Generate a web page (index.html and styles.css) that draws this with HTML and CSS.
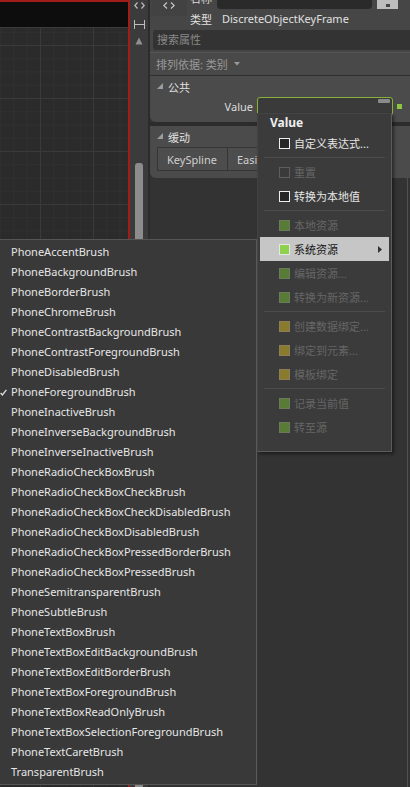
FILE: index.html
```html
<!DOCTYPE html>
<html>
<head>
<meta charset="utf-8">
<link rel="stylesheet" href="styles.css">
</head>
<body>
<div class="app">
  <div class="canvas">
    <div class="canvas-top"></div>
    <div class="canvas-grid"></div>
  </div>
  <div class="strip">
    <svg class="strip-icon i1" width="11" height="7" viewBox="0 0 11 7"><path d="M3.5 0.5 L0.8 3.5 L3.5 6.5 M7.5 0.5 L10.2 3.5 L7.5 6.5" fill="none" stroke="#bdbdbd" stroke-width="1.2"/></svg>
    <svg class="strip-icon i2" width="11" height="9" viewBox="0 0 11 9"><path d="M0.5 0 V9 M10.5 0 V9 M1 4.5 H10" fill="none" stroke="#bdbdbd" stroke-width="1"/></svg>
    <svg class="strip-icon i3" width="8" height="8" viewBox="0 0 8 8"><path d="M4 0.5 L7.5 7.5 H0.5 Z" fill="#8f8f8f"/></svg>
    <div class="scroll-track"><div class="scroll-thumb"></div></div>
  </div>
  <div class="panel">
    <div class="props-top">
      <div class="panel-head">
        <div class="head-tab"><svg width="12" height="7" viewBox="0 0 12 7"><path d="M4 0.5 L0.8 3.5 L4 6.5 M8 0.5 L11.2 3.5 L8 6.5" fill="none" stroke="#c8c8c8" stroke-width="1.1"/></svg></div>
        <div class="head-rows">
          <div class="name-row"><span class="name-label">名称</span><div class="name-input"></div><div class="name-btn"><span class="name-dot"></span></div></div>
          <div class="type-row"><span class="type-label">类型</span><span class="type-val">DiscreteObjectKeyFrame</span></div>
        </div>
      </div>
      <div class="search">搜索属性</div>
      <div class="sort">排列依据: 类别<svg class="sort-arrow" width="6" height="4" viewBox="0 0 6 4"><path d="M0 0 H6 L3 3.5 Z" fill="#9a9a9a"/></svg></div>
    </div>
    <div class="group g1">
      <div class="group-head"><svg class="group-tri" width="6" height="6" viewBox="0 0 6 6"><path d="M6 0 V6 H0 Z" fill="#9c9c9c"/></svg>公共</div>
      <div class="value-row">
        <span class="value-label">Value</span>
        <div class="value-input"><div class="value-drop"></div></div>
        <div class="value-mark"></div>
      </div>
    </div>
    <div class="group g2">
      <div class="group-head"><svg class="group-tri" width="6" height="6" viewBox="0 0 6 6"><path d="M6 0 V6 H0 Z" fill="#9c9c9c"/></svg>缓动</div>
      <div class="tabs"><div class="tab">KeySpline</div><div class="tab">Easing</div></div>
    </div>
  </div>
</div>

<div class="ctx-menu">
  <div class="ctx-title">Value</div>
  <div class="ctx-item"><span class="cb cb-white"></span>自定义表达式...</div>
  <div class="ctx-sep"></div>
  <div class="ctx-item disabled"><span class="cb cb-dis"></span>重置</div>
  <div class="ctx-item"><span class="cb cb-white"></span>转换为本地值</div>
  <div class="ctx-sep"></div>
  <div class="ctx-item disabled"><span class="cb cb-green"></span>本地资源</div>
  <div class="ctx-item active"><span class="cb cb-bright"></span>系统资源<svg class="ctx-arrow" width="4" height="7" viewBox="0 0 4 7"><path d="M0 0 L4 3.5 L0 7 Z" fill="#333"/></svg></div>
  <div class="ctx-item disabled"><span class="cb cb-green"></span>编辑资源...</div>
  <div class="ctx-item disabled"><span class="cb cb-green"></span>转换为新资源...</div>
  <div class="ctx-sep"></div>
  <div class="ctx-item disabled"><span class="cb cb-olive"></span>创建数据绑定...</div>
  <div class="ctx-item disabled"><span class="cb cb-olive"></span>绑定到元素...</div>
  <div class="ctx-item disabled"><span class="cb cb-olive"></span>模板绑定</div>
  <div class="ctx-sep"></div>
  <div class="ctx-item disabled"><span class="cb cb-green"></span>记录当前值</div>
  <div class="ctx-item disabled"><span class="cb cb-green"></span>转至源</div>
</div>

<div class="sub-menu">
  <div class="sub-item">PhoneAccentBrush</div>
  <div class="sub-item">PhoneBackgroundBrush</div>
  <div class="sub-item">PhoneBorderBrush</div>
  <div class="sub-item">PhoneChromeBrush</div>
  <div class="sub-item">PhoneContrastBackgroundBrush</div>
  <div class="sub-item">PhoneContrastForegroundBrush</div>
  <div class="sub-item">PhoneDisabledBrush</div>
  <div class="sub-item checked"><svg class="check" width="7" height="7" viewBox="0 0 7 7"><path d="M0.6 4 L2.4 6 L6.4 0.8" fill="none" stroke="#e0e0e0" stroke-width="1.3"/></svg>PhoneForegroundBrush</div>
  <div class="sub-item">PhoneInactiveBrush</div>
  <div class="sub-item">PhoneInverseBackgroundBrush</div>
  <div class="sub-item">PhoneInverseInactiveBrush</div>
  <div class="sub-item">PhoneRadioCheckBoxBrush</div>
  <div class="sub-item">PhoneRadioCheckBoxCheckBrush</div>
  <div class="sub-item">PhoneRadioCheckBoxCheckDisabledBrush</div>
  <div class="sub-item">PhoneRadioCheckBoxDisabledBrush</div>
  <div class="sub-item">PhoneRadioCheckBoxPressedBorderBrush</div>
  <div class="sub-item">PhoneRadioCheckBoxPressedBrush</div>
  <div class="sub-item">PhoneSemitransparentBrush</div>
  <div class="sub-item">PhoneSubtleBrush</div>
  <div class="sub-item">PhoneTextBoxBrush</div>
  <div class="sub-item">PhoneTextBoxEditBackgroundBrush</div>
  <div class="sub-item">PhoneTextBoxEditBorderBrush</div>
  <div class="sub-item">PhoneTextBoxForegroundBrush</div>
  <div class="sub-item">PhoneTextBoxReadOnlyBrush</div>
  <div class="sub-item">PhoneTextBoxSelectionForegroundBrush</div>
  <div class="sub-item">PhoneTextCaretBrush</div>
  <div class="sub-item">TransparentBrush</div>
</div>
</body>
</html>
```

FILE: styles.css
```css
html, body {
  margin: 0;
  padding: 0;
}
body {
  width: 410px;
  height: 787px;
  overflow: hidden;
  position: relative;
  background: #333333;
  font-family: "Noto Sans", "Noto Sans CJK SC", sans-serif;
  font-size: 11px;
  color: #dcdcdc;
}
.app {
  display: flex;
  height: 787px;
}

/* canvas */
.canvas {
  width: 128px;
  border-right: 2px solid #a11d19;
  display: flex;
  flex-direction: column;
  background: #2b2b2b;
}
.canvas-top {
  height: 25px;
  border-top: 2px solid #a11d19;
  background: #0d0d0d;
  border-bottom: 1px solid #3a3a3a;
}
.canvas-grid {
  flex: 1;
  background-color: #2b2b2b;
  background-image:
    linear-gradient(to right, #3a3a3a 1px, transparent 1px),
    linear-gradient(to bottom, #3a3a3a 1px, transparent 1px),
    linear-gradient(to right, #303030 1px, transparent 1px),
    linear-gradient(to bottom, #303030 1px, transparent 1px);
  background-size: 53px 53px, 53px 53px, 13.25px 13.25px, 13.25px 13.25px;
  background-position: 40px 0, 0 17px, 40px 0, 0 17px;
}

/* strip */
.strip {
  width: 18px;
  background: #3b3b3b;
  display: flex;
  flex-direction: column;
  align-items: center;
}
.strip-icon { display: block; flex: none; }
.i1 { margin-top: 2px; }
.i2 { margin-top: 11px; }
.i3 { margin-top: 8px; }
.scroll-track {
  flex: 1;
  width: 8px;
  display: flex;
  flex-direction: column;
}
.scroll-thumb {
  margin-top: 118px;
  flex: 1;
  background: #8c8c8c;
  border-radius: 3px 3px 0 0;
}

/* panel */
.panel {
  flex: 1;
  border-left: 2px solid #2c2c2c;
  display: flex;
  flex-direction: column;
  background: #333333;
  box-shadow: inset -2px 0 0 #333, inset -3px 0 0 #505050;
}
.props-top {
  background: #464646;
}
.panel-head {
  height: 28px;
  display: flex;
  align-items: flex-start;
}
.head-tab {
  width: 36px;
  height: 16px;
  margin-left: 1px;
  background: #424242;
  display: flex;
  align-items: center;
  justify-content: center;
  padding-bottom: 6px;
  box-sizing: border-box;
}
.head-rows {
  margin-left: 3px;
  flex: 1;
  display: flex;
  flex-direction: column;
}
.name-row {
  margin-top: -11px;
  height: 20px;
  display: flex;
  align-items: center;
}
.name-label {
  font-size: 11px;
  width: 27px;
  color: #dcdcdc;
  line-height: 20px;
}
.name-input {
  width: 155px;
  height: 20px;
  background: #2a2a2a;
  border-radius: 4px;
}
.name-btn {
  width: 21px;
  height: 20px;
  margin-left: 5px;
  background: #bdbdbd;
  position: relative;
}
.name-dot {
  position: absolute;
  left: 9px;
  top: 15px;
  width: 4px;
  height: 3px;
  background: #444;
}
.type-row {
  height: 19px;
  display: flex;
  align-items: center;
  white-space: nowrap;
}
.type-label {
  font-size: 11px;
  color: #e0e0e0;
  width: 32px;
}
.type-val {
  color: #e0e0e0;
  font-size: 11px;
}
.search {
  margin: 2px 0 0 3px;
  height: 20px;
  line-height: 20px;
  background: #333333;
  border-radius: 3px 0 0 3px;
  padding-left: 4px;
  color: #888888;
  font-size: 11px;
}
.sort {
  margin-top: 2px;
  height: 22px;
  border-top: 1px solid #565656;
  border-bottom: 1px solid #2f2f2f;
  background: #494949;
  display: flex;
  align-items: center;
  padding-left: 6px;
  color: #9a9a9a;
  font-size: 11px;
}
.sort-arrow { margin-left: 6px; }

.group {
  background: #4b4b4b;
  border-radius: 0 0 0 6px;
}
.g1 {
  padding-bottom: 6px;
}
.g2 {
  border-top: 4px solid #2c2c2c;
  padding-bottom: 7px;
}
.group-head {
  height: 21px;
  display: flex;
  align-items: center;
  padding-left: 7px;
  font-size: 11px;
  color: #e0e0e0;
}
.group-tri { margin-right: 5px; margin-top: -1px; }
.value-row {
  height: 19px;
  display: flex;
  align-items: center;
  justify-content: flex-end;
  padding-right: 8px;
}
.value-label {
  color: #dcdcdc;
}
.value-input {
  margin-left: 4px;
  width: 136px;
  height: 19px;
  box-sizing: border-box;
  border: 1px solid #86b23a;
  border-radius: 3px;
  background: #3a3a3a;
  position: relative;
}
.value-drop {
  position: absolute;
  right: 2px;
  top: 1px;
  width: 12px;
  height: 4px;
  background: #8a8a8a;
  border-radius: 1px;
}
.value-mark {
  margin-left: 4px;
  width: 5px;
  height: 5px;
  background: #8dc63f;
}
.tabs {
  display: flex;
  margin-left: 7px;
}
.tab {
  height: 24px;
  box-sizing: border-box;
  border: 1px solid #363636;
  background: #4d4d4d;
  color: #cfcfcf;
  display: flex;
  align-items: center;
  padding: 0 9px;
  width: 71px;
}
.tab + .tab { border-left: none; }

/* context menu */
.ctx-menu {
  position: absolute;
  left: 257px;
  top: 113px;
  width: 135px;
  box-sizing: border-box;
  background: #3b3b3b;
  border: 1px solid #5c5c5c;
  border-left-color: #444;
  border-top-color: #444;
  box-shadow: 2px 2px 3px rgba(0,0,0,0.45);
  padding-bottom: 12px;
}
.ctx-title {
  height: 17px;
  line-height: 18px;
  padding-left: 12px;
  font-weight: bold;
  color: #eeeeee;
  font-size: 12px;
}
.ctx-item {
  height: 24px;
  margin: 0 2px;
  padding-left: 19px;
  display: flex;
  align-items: center;
  font-size: 11px;
  color: #e6e6e6;
}
.ctx-item.disabled { color: #666666; }
.ctx-item.active {
  background: #c6c6c6;
  color: #141414;
}
.cb {
  width: 11px;
  height: 11px;
  box-sizing: border-box;
  margin-right: 4px;
  flex: none;
}
.cb-white { border: 1.5px solid #eeeeee; background: #262626; }
.cb-dis { border: 1px solid #5e5e5e; background: #3a3a3a; }
.cb-green { border: 1px solid #6c7a5c; background: #587c35; }
.cb-olive { border: 1px solid #8a7f5a; background: #8a7a2e; }
.cb-bright { border: 1px solid #e6e6e6; background: #8ed14e; }
.ctx-arrow { margin-left: auto; margin-right: 7px; }
.ctx-sep {
  height: 1px;
  margin: 2px 6px;
  background: #4c4c4c;
}

/* submenu */
.sub-menu {
  position: absolute;
  left: 0;
  top: 239px;
  width: 257px;
  box-sizing: border-box;
  background: #393939;
  border-top: 1px solid #555555;
  border-right: 1px solid #5a5a5a;
  border-bottom: 1px solid #555555;
  padding: 2px 0;
}
.sub-item {
  height: 20px;
  line-height: 20px;
  padding-left: 11px;
  color: #e6e6e6;
  white-space: nowrap;
  position: relative;
}
.check {
  position: absolute;
  left: 0;
  top: 7px;
}
```
